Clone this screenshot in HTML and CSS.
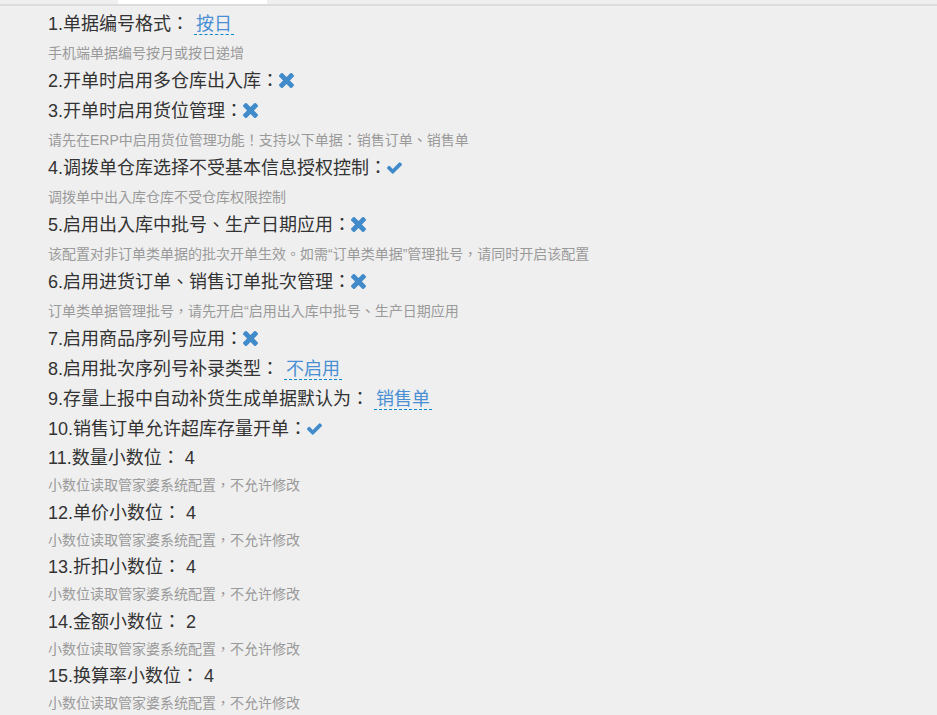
FILE: index.html
```html
<!DOCTYPE html>
<html lang="zh-CN">

<head>
    <meta charset="UTF-8">
    <meta name="viewport" content="width=device-width, initial-scale=1.0">
    <title>系统配置</title>
    <link rel="stylesheet" href="styles.css">
</head>

<body>
    <div class="tab-bar">
        <div class="tab-active"></div>
    </div>

    <div class="settings">
        <div class="setting-title">1.单据编号格式： <a class="editable">按日</a></div>
        <div class="setting-tip">手机端单据编号按月或按日递增</div>

        <div class="setting-title">2.开单时启用多仓库出入库：<svg class="icon-off" viewBox="302 366 1188 1188"><path d="M1490 1322q0 40-28 68l-136 136q-28 28-68 28t-68-28l-294-294-294 294q-28 28-68 28t-68-28l-136-136q-28-28-28-68t28-68l294-294-294-294q-28-28-28-68t28-68l136-136q28-28 68-28t68 28l294 294 294-294q28-28 68-28t68 28l136 136q28 28 28 68t-28 68l-294 294 294 294q28 28 28 68z"/></svg></div>

        <div class="setting-title">3.开单时启用货位管理：<svg class="icon-off" viewBox="302 366 1188 1188"><path d="M1490 1322q0 40-28 68l-136 136q-28 28-68 28t-68-28l-294-294-294 294q-28 28-68 28t-68-28l-136-136q-28-28-28-68t28-68l294-294-294-294q-28-28-28-68t28-68l136-136q28-28 68-28t68 28l294 294 294-294q28-28 68-28t68 28l136 136q28 28 28 68t-28 68l-294 294 294 294q28 28 28 68z"/></svg></div>
        <div class="setting-tip">请先在ERP中启用货位管理功能！支持以下单据：销售订单、销售单</div>

        <div class="setting-title">4.调拨单仓库选择不受基本信息授权控制：<svg class="icon-on" viewBox="121 334 1550 1188"><path d="M1671 566q0 40-28 68l-724 724-136 136q-28 28-68 28t-68-28l-136-136-362-362q-28-28-28-68t28-68l136-136q28-28 68-28t68 28l294 295 656-657q28-28 68-28t68 28l136 136q28 28 28 68z"/></svg></div>
        <div class="setting-tip">调拨单中出入库仓库不受仓库权限控制</div>

        <div class="setting-title">5.启用出入库中批号、生产日期应用：<svg class="icon-off" viewBox="302 366 1188 1188"><path d="M1490 1322q0 40-28 68l-136 136q-28 28-68 28t-68-28l-294-294-294 294q-28 28-68 28t-68-28l-136-136q-28-28-28-68t28-68l294-294-294-294q-28-28-28-68t28-68l136-136q28-28 68-28t68 28l294 294 294-294q28-28 68-28t68 28l136 136q28 28 28 68t-28 68l-294 294 294 294q28 28 28 68z"/></svg></div>
        <div class="setting-tip">该配置对非订单类单据的批次开单生效。如需“订单类单据”管理批号，请同时开启该配置</div>

        <div class="setting-title">6.启用进货订单、销售订单批次管理：<svg class="icon-off" viewBox="302 366 1188 1188"><path d="M1490 1322q0 40-28 68l-136 136q-28 28-68 28t-68-28l-294-294-294 294q-28 28-68 28t-68-28l-136-136q-28-28-28-68t28-68l294-294-294-294q-28-28-28-68t28-68l136-136q28-28 68-28t68 28l294 294 294-294q28-28 68-28t68 28l136 136q28 28 28 68t-28 68l-294 294 294 294q28 28 28 68z"/></svg></div>
        <div class="setting-tip">订单类单据管理批号，请先开启“启用出入库中批号、生产日期应用</div>

        <div class="setting-title">7.启用商品序列号应用：<svg class="icon-off" viewBox="302 366 1188 1188"><path d="M1490 1322q0 40-28 68l-136 136q-28 28-68 28t-68-28l-294-294-294 294q-28 28-68 28t-68-28l-136-136q-28-28-28-68t28-68l294-294-294-294q-28-28-28-68t28-68l136-136q28-28 68-28t68 28l294 294 294-294q28-28 68-28t68 28l136 136q28 28 28 68t-28 68l-294 294 294 294q28 28 28 68z"/></svg></div>

        <div class="setting-title">8.启用批次序列号补录类型： <a class="editable">不启用</a></div>

        <div class="setting-title">9.存量上报中自动补货生成单据默认为： <a class="editable">销售单</a></div>

        <div class="setting-title">10.销售订单允许超库存量开单：<svg class="icon-on" viewBox="121 334 1550 1188"><path d="M1671 566q0 40-28 68l-724 724-136 136q-28 28-68 28t-68-28l-136-136-362-362q-28-28-28-68t28-68l136-136q28-28 68-28t68 28l294 295 656-657q28-28 68-28t68 28l136 136q28 28 28 68z"/></svg></div>

        <div class="decimal-group">
            <div class="setting-title">11.数量小数位： 4</div>
            <div class="setting-tip">小数位读取管家婆系统配置，不允许修改</div>

            <div class="setting-title">12.单价小数位： 4</div>
            <div class="setting-tip">小数位读取管家婆系统配置，不允许修改</div>

            <div class="setting-title">13.折扣小数位： 4</div>
            <div class="setting-tip">小数位读取管家婆系统配置，不允许修改</div>

            <div class="setting-title">14.金额小数位： 2</div>
            <div class="setting-tip">小数位读取管家婆系统配置，不允许修改</div>

            <div class="setting-title">15.换算率小数位： 4</div>
            <div class="setting-tip">小数位读取管家婆系统配置，不允许修改</div>
        </div>
    </div>
</body>

</html>
```

FILE: styles.css
```css
* {
    padding: 0;
    margin: 0;
    box-sizing: border-box;
}

body {
    background: #efefef;
    font-family: "Liberation Sans", "Noto Sans CJK TC", sans-serif;
    font-feature-settings: "locl" 0;
    color: #333;
}

.tab-bar {
    height: 6px;
    border-bottom: 2px solid #dddddd;
}

.tab-active {
    width: 149px;
    height: 4px;
    margin-left: 118px;
    background: #ffffff;
}

.settings {
    padding: 4px 0 0 48px;
}

.setting-title {
    font-size: 18px;
    line-height: 29px;
    height: 29px;
}

.setting-tip {
    font-size: 14px;
    line-height: 28px;
    height: 28px;
    color: #9a9a9a;
}

.setting-title + .setting-title {
    margin-top: 1px;
}

.decimal-group {
    margin-top: 1px;
}

.decimal-group .setting-title {
    line-height: 27px;
    height: 27px;
}

.decimal-group .setting-tip {
    line-height: 27.5px;
    height: 27.5px;
}

.editable {
    color: #4a8fd3;
    border-bottom: 1px dashed #0088cc;
    padding: 0 2px;
    cursor: pointer;
}

.icon-off {
    width: 15px;
    height: 15px;
    fill: #428bca;
    vertical-align: -1px;
}

.icon-on {
    width: 15px;
    height: 12px;
    fill: #428bca;
    vertical-align: 0;
}
```
